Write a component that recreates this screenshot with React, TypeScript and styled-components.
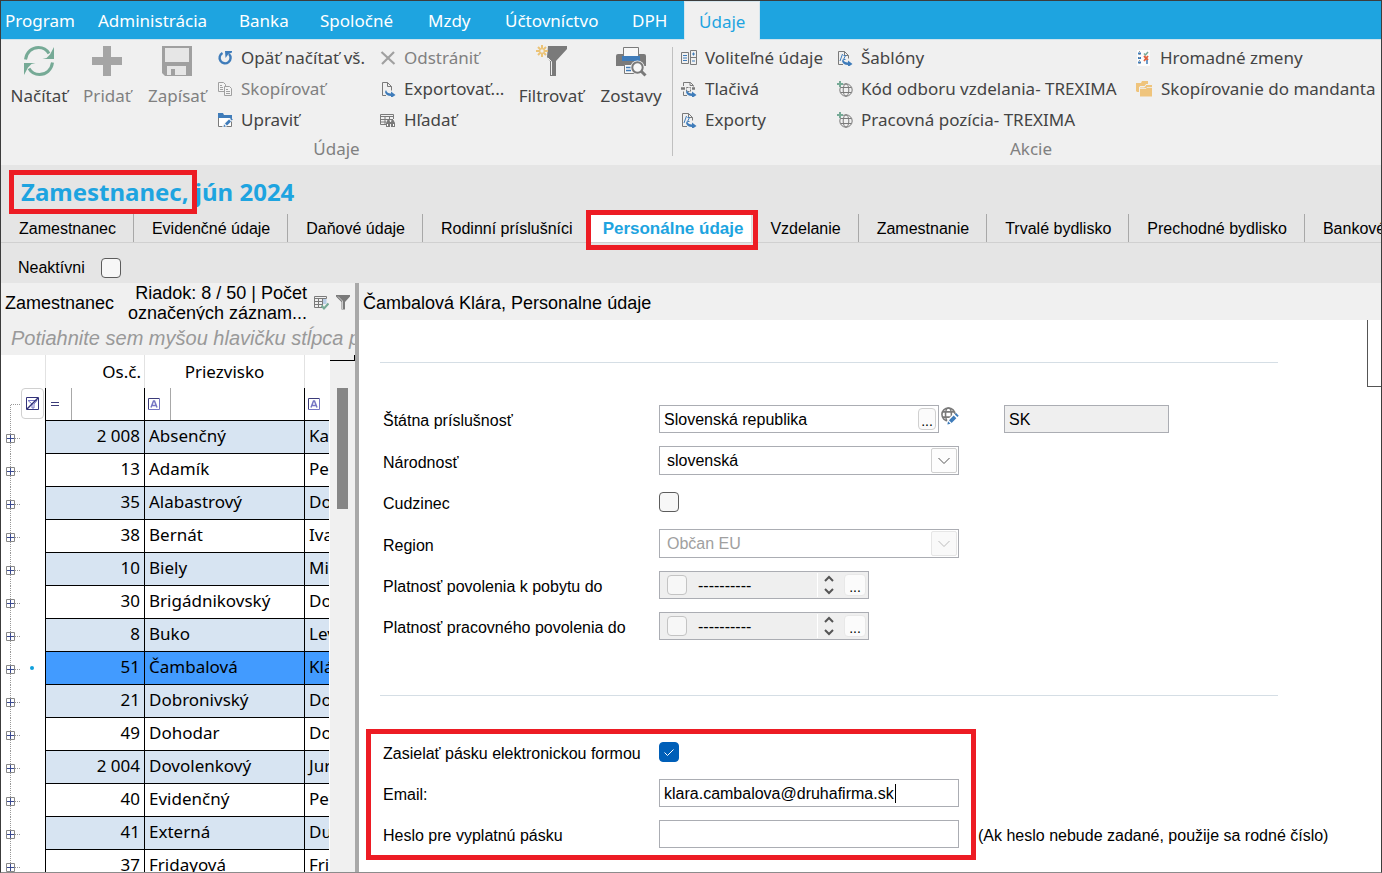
import React from 'react';
import styled, { createGlobalStyle, css } from 'styled-components';

const ui = '"Noto Sans", "Open Sans", sans-serif';
const sans = '"Liberation Sans", Arial, sans-serif';
const blue = '#1ea4e0';
const red = '#ed1c24';

const GlobalStyle = createGlobalStyle`
  *, *::before, *::after { box-sizing: border-box; }
  body { margin: 0; background: #fff; font: 16px ${sans}; color: #000; }
  button, input, select { font: inherit; color: inherit; margin: 0; }
  button { border: 0; padding: 0; background: none; text-align: left; }
`;

const Shell = styled.div`
  height: 100vh;
  overflow: hidden;
  display: flex;
  flex-direction: column;
  border: 1px solid #3c3c3c;
  border-bottom-color: #8c8c8c;
`;

/* Menu bar */
const MenuBar = styled.nav`
  flex: none;
  height: 39px;
  display: grid;
  grid-template-columns: 76px 141px 81px 108px 77px 127px 73px 76px;
  background: ${blue};
  border-bottom: 1px solid #cfe3ec;
  font: 17px/40px ${ui};
  white-space: nowrap;
`;

const MenuItem = styled.button<{ $active?: boolean }>`
  height: 38px;
  padding-left: 21px;
  color: #fff;
  &:first-child { padding-left: 4px; }
  ${p => p.$active && css`
    height: 39px;
    padding-left: 14px;
    background: #f0f0f0;
    color: ${blue};
    border: 1px solid #d5e6ee;
    border-bottom: 0;
  `}
`;

/* Ribbon */
const Ribbon = styled.div`
  flex: none;
  height: 125px;
  display: flex;
  background: #f0f0f0;
  font: 17px/24px ${ui};
  color: #444;
  white-space: nowrap;
`;

const Group = styled.section<{ $width?: number }>`
  display: flex;
  flex-direction: column;
  flex: ${p => (p.$width ? `none` : 1)};
  width: ${p => (p.$width ? `${p.$width}px` : 'auto')};
  padding-left: ${p => (p.$width ? 0 : 8)}px;
`;

const GroupBody = styled.div`
  display: flex;
  height: 97px;
  padding-top: 2px;
`;

const GroupLabel = styled.div`
  text-align: center;
  color: #808080;
`;

const Separator = styled.div`
  width: 1px;
  height: 109px;
  margin-top: 7px;
  background: #c0c0c0;
`;

const BigButton = styled.button<{ $width: number; $dim?: boolean }>`
  width: ${p => p.$width}px;
  padding-top: 3px;
  display: flex;
  flex-direction: column;
  align-items: center;
  gap: 7px;
  color: ${p => (p.$dim ? '#808080' : '#444')};
`;

const Column = styled.div<{ $width: number }>`
  width: ${p => p.$width}px;
  display: flex;
  flex-direction: column;
`;

const SmallButton = styled.button<{ $dim?: boolean }>`
  height: 31px;
  display: flex;
  align-items: center;
  gap: 8px;
  color: ${p => (p.$dim ? '#808080' : '#444')};
  svg { flex: none; }
`;

/* Title, tabs and filter strip */
const Heading = styled.header`
  flex: none;
  background: #e5e5e5;
`;

const Callout = styled.span<{ $gap: string }>`
  position: absolute;
  inset: ${p => p.$gap};
  border: 5px solid ${red};
  pointer-events: none;
  z-index: 2;
`;

const Title = styled.h1`
  margin: 0;
  padding: 5px 0 0 20px;
  height: 49px;
  font: bold 24px/44px ${ui};
  color: ${blue};
`;

const Marked = styled.span`
  position: relative;
  display: inline-block;
`;

const Tabs = styled.nav`
  display: flex;
  height: 29px;
  border-bottom: 1px solid #d0d0d0;
  white-space: nowrap;
`;

const Tab = styled.a<{ $active?: boolean }>`
  position: relative;
  flex: none;
  height: 28px;
  padding: 0 17px 0 18px;
  border-right: 1px solid #a8a8a8;
  line-height: 30px;
  color: #000;
  text-decoration: none;
  ${p => p.$active && css`
    padding: 0 8px 0 12px;
    color: ${blue};
    background: #fff;
    border-right-color: #ddd;
    font-weight: bold;
    font-size: 17px;
  `}
`;

const Strip = styled.label`
  display: flex;
  align-items: center;
  gap: 16px;
  height: 40px;
  padding: 10px 0 0 17px;
  line-height: 20px;
`;

const Check = styled.input.attrs({ type: 'checkbox' })<{ $soft?: boolean }>`
  appearance: none;
  flex: none;
  width: 20px;
  height: 20px;
  border: 1px solid ${p => (p.$soft ? '#c4c4c4' : '#5c5c5c')};
  border-radius: 4px;
  background: #f7f7f7;
  &:checked {
    border-color: #005fb8;
    background: #005fb8;
  }
`;

const CheckWrap = styled.span`
  position: relative;
  display: flex;
  svg { position: absolute; inset: 0; pointer-events: none; }
`;

/* Workspace */
const Work = styled.main`
  flex: 1;
  min-height: 0;
  display: flex;
`;

const ListPane = styled.section`
  flex: none;
  width: 358px;
  display: flex;
  flex-direction: column;
  border-right: 4px solid #a9a9a9;
  overflow: hidden;
`;

const ListHead = styled.div`
  flex: none;
  height: 37px;
  display: flex;
  align-items: center;
  gap: 7px;
  padding: 2px 5px 0 4px;
  background: #f0f0f0;
  font-size: 18px;
  line-height: 20px;
  white-space: nowrap;
  svg { flex: none; }
`;

const ListName = styled.span`
  flex: 1;
`;

const Counter = styled.span`
  text-align: right;
`;

const DropZone = styled.div`
  flex: none;
  height: 35px;
  padding-left: 10px;
  background: #f0f0f0;
  color: #999;
  font: italic 20px/37px ${sans};
  white-space: nowrap;
`;

const GridArea = styled.div`
  flex: 1;
  min-height: 0;
  display: flex;
`;

const GridClip = styled.div`
  flex: none;
  width: 328px;
  overflow: hidden;
`;

const Table = styled.table`
  width: 328px;
  table-layout: fixed;
  border-collapse: separate;
  border-spacing: 0;
  font: 17px/24px ${ui};
  white-space: nowrap;
`;

const HeadCell = styled.th<{ $align?: string }>`
  height: 33px;
  padding: 0 3px;
  border-right: 1px solid #e2e2e2;
  font-weight: normal;
  text-align: ${p => p.$align ?? 'center'};
  &:last-child { border-right: 0; }
`;

const FilterCell = styled.td`
  height: 33px;
  padding: 0;
  border-right: 1px solid #000;
  border-bottom: 1px solid #000;
  &:last-child { border-right: 0; }
`;

const FilterBox = styled.div`
  display: flex;
  height: 32px;
  overflow: hidden;
`;

const FilterOp = styled.button`
  flex: none;
  width: 26px;
  display: flex;
  align-items: center;
  padding-left: 3px;
  border-right: 1px solid #a8a8a8;
`;

const FilterClear = styled.button`
  display: flex;
  align-items: center;
  justify-content: center;
  width: 23px;
  height: 31px;
  border: 1px solid #d0d0d0;
  border-radius: 4px;
`;

const RowHead = styled.td`
  height: 33px;
  padding: 0;
  border-right: 1px solid #000;
`;

const RowHeadBox = styled.div`
  display: flex;
  height: 33px;
`;

const Cell = styled.td<{ $bg: string; $right?: boolean }>`
  height: 33px;
  padding: 0 4px 2px;
  border-right: 1px solid #000;
  border-bottom: 1px solid #000;
  background: ${p => p.$bg};
  text-align: ${p => (p.$right ? 'right' : 'left')};
  overflow: hidden;
  &:last-child { border-right: 0; }
`;

const Scroll = styled.div`
  flex: 1;
  display: flex;
  flex-direction: column;
  align-items: center;
  margin-left: 1px;
  background: #f0f0f0;
`;

const ScrollCap = styled.div`
  align-self: stretch;
  height: 6px;
  border: solid #000;
  border-width: 0 1px 1px 0;
  background: #f0f0f0;
`;

const Thumb = styled.div`
  width: 11px;
  height: 121px;
  margin-top: 27px;
  background: #868686;
`;

/* Detail form */
const Detail = styled.section`
  flex: 1;
  min-width: 0;
  display: flex;
  flex-direction: column;
`;

const DetailHead = styled.h2`
  flex: none;
  margin: 0;
  height: 37px;
  padding: 2px 0 0 4px;
  background: #f0f0f0;
  font: 18px/36px ${sans};
`;

const DetailBody = styled.div`
  flex: 1;
  min-height: 0;
  display: flex;
  justify-content: space-between;
  overflow: hidden;
`;

const Form = styled.form`
  width: 919px;
  padding: 42px 0 0 21px;
`;

const Rule = styled.hr`
  margin: 0;
  border: 0;
  height: 1px;
  background: #d5dee5;
`;

const Fields = styled.div<{ $top: number; $bottom: number }>`
  position: relative;
  display: flex;
  flex-direction: column;
  gap: 13px;
  padding: ${p => p.$top}px 0 ${p => p.$bottom}px 3px;
`;

const Row = styled.div`
  display: flex;
  align-items: center;
  min-height: 28px;
  white-space: nowrap;
`;

const Label = styled.label`
  flex: none;
  width: 276px;
  padding-top: 4px;
`;

const Box = styled.div<{ $width: number; $grey?: boolean }>`
  position: relative;
  flex: none;
  display: flex;
  align-items: center;
  width: ${p => p.$width}px;
  height: 28px;
  border: 1px solid #abadb3;
  background: ${p => (p.$grey ? '#efefef' : '#fff')};
`;

const Text = styled.input`
  flex: 1;
  min-width: 0;
  height: 26px;
  padding: 1px 4px 0;
  border: 0;
  outline: 0;
  background: none;
`;

const Dots = styled.button<{ $wide?: boolean }>`
  flex: none;
  width: ${p => (p.$wide ? 22 : 18)}px;
  height: 22px;
  margin-right: 2px;
  border: 1px solid ${p => (p.$wide ? '#e8e8e8' : '#d0d0d0')};
  border-radius: 4px;
  background: #fbfbfb;
  font-size: 14px;
  line-height: 24px;
  text-align: center;
`;

const Select = styled.select`
  appearance: none;
  flex: 1;
  height: 27px;
  padding: 0 7px;
  border: 0;
  outline: 0;
  background: none;
  opacity: 1;
  &:disabled { color: #a0a0a0; }
`;

const SelectBox = styled(Box)`
  height: 29px;
`;

const Arrow = styled.span<{ $faint?: boolean }>`
  position: absolute;
  right: 1px;
  top: 1px;
  width: 26px;
  height: 25px;
  display: flex;
  align-items: center;
  justify-content: center;
  border: 1px solid ${p => (p.$faint ? '#e6e6e6' : '#d0d0d0')};
  border-radius: 2px;
  background: ${p => (p.$faint ? '#f9f9f9' : '#fdfdfd')};
  pointer-events: none;
`;

const Spin = styled.span`
  display: flex;
  width: 27px;
  height: 24px;
  padding-right: 4px;
  align-items: center;
  justify-content: center;
  border-left: 1px solid #fff;
`;

const Caret = styled.span`
  position: absolute;
  left: 235px;
  top: 4px;
  width: 1px;
  height: 19px;
  background: #000;
`;

const LinkIcon = styled.button`
  align-self: flex-start;
  width: 65px;
  padding-left: 1px;
  display: flex;
`;

const Note = styled.span`
  padding: 4px 0 0 19px;
`;

const SideBox = styled.div`
  flex: none;
  width: 14px;
  height: 67px;
  border: solid #555;
  border-width: 0 0 1px 1px;
`;

const DateCheck = styled(Check)`
  margin: 0 7px;
`;

const SlipCallout = styled.span`
  position: absolute;
  inset: 33px 302px 0 -14px;
  border: 5px solid ${red};
  pointer-events: none;
`;

/* Icons */
const g = '#7a7a7a';
const b = '#3f7cba';

const Refresh = () => (
  <svg width="32" height="32" viewBox="0 0 32 32" fill="none" stroke="#76aa96" strokeWidth="3">
    <path d="M2.500 14.500C3.500 7 9 2.500 15.500 2.500c5 0 8.500 2.500 10.500 6" />
    <path d="M29.500 17.500C28.500 25 23 29.500 16.500 29.500c-5 0-8.500-2.500-10.500-6" />
    <path d="M31 2v12H19.500l4-1 3.500-3.500z M1 30V18h11.500l-4 1L5 22.500z" fill="#76aa96" stroke="none" />
  </svg>
);
const Plus = () => (
  <svg width="32" height="32" viewBox="0 0 32 32"><path d="M12 1h8v11h11v8H20v11h-8V20H1v-8h11z" fill="#a5a5a5" /></svg>
);
const Save = () => (
  <svg width="32" height="32" viewBox="0 0 32 32">
    <path d="M1 1h30v30H4l-3-3z" fill="#a0a0a0" />
    <path d="M4 3h24v14H4z" fill="#e6e6e6" />
    <path d="M6 21h19v9H6z" fill="#e6e6e6" /><path d="M10 24h4v6h-4z" fill="#a0a0a0" />
  </svg>
);
const Funnel = () => (
  <svg width="34" height="32" viewBox="0 0 34 32">
    <path d="M14 1h19v3L22 16v15h-6V16l-3-4z" fill={g} />
    <path d="M14 13l3.500 3.500V30" fill="none" stroke="#f0f0f0" />
    <g stroke="#ecc376" strokeWidth="2"><path d="M8 0v12M2 6h12M4 2l8 8M12 2l-8 8" /></g>
    <circle cx="8" cy="6" r="2.200" fill="#f0f0f0" stroke="#ecc376" />
  </svg>
);
const Printer = () => (
  <svg width="32" height="32" viewBox="0 0 32 32">
    <path d="M3 9h26q2 0 2 2v10H1V11q0-2 2-2z" fill={g} />
    <path d="M8.500 2.500h15V13h-15z" fill="#f7f7f7" stroke={g} />
    <path d="M7 11h18v5H7z" fill={b} />
    <path d="M9.500 19.500h13v9h-13z" fill="#f7f7f7" stroke={g} />
    <path d="M11 22.500h5M11 25.500h5" stroke={b} strokeWidth="1.500" />
    <circle cx="22.500" cy="22.500" r="7" fill="#f0f0f0" />
    <path d="M26 26l4.500 4.500" stroke={g} strokeWidth="3" />
    <circle cx="22.500" cy="22.500" r="5.200" fill="#f7f7f7" stroke={g} strokeWidth="2" />
  </svg>
);
const Undo = () => (
  <svg width="16" height="16" viewBox="0 0 16 16" fill="none" stroke={b} strokeWidth="2.400">
    <path d="M5.500 3a5.500 5.500 0 1 0 6.500 1" /><path d="M8 1h7v1.500l-3.500 1.500L8.500 8z" fill={b} stroke="none" />
  </svg>
);
const Copy = () => (
  <svg width="16" height="16" viewBox="0 0 16 16" stroke="#a0a0a0" fill="#f4f4f4">
    <path d="M1.500 1.500h5l2 2v7h-7z" /><path d="M3 4.500h2M3 6.500h3M3 8.500h3" />
    <path d="M7.500 5.500h5l2 2v7h-7z" /><path d="M9 8.500h2M9 10.500h4M9 12.500h4" />
  </svg>
);
const Edit = () => (
  <svg width="16" height="16" viewBox="0 0 16 16">
    <path d="M1.500 3.500h13v11h-13z" fill="#fff" stroke={g} /><path d="M1 1h5l1 2h8v3H1z" fill={b} />
    <path d="M5 16l1-4 7-6 3 2-7 7z" fill="#f4f4f4" /><path d="M6.500 15l.6-2.500 1.900 2zM8 11.600l4-4 2 2-4 4zM13 6.800l1-1 1.800 1.800-1 1z" fill={b} />
  </svg>
);
const Cross = () => (
  <svg width="16" height="16" viewBox="0 0 16 16" stroke="#a0a0a0" strokeWidth="2.200"><path d="M1.500 2l13 12M14 2L2 14" /></svg>
);
const Swoosh = () => <path d="M6 9q1 3.500 5 3.500V10.500l4.500 3.500-4.500 3v-2q-5 0-6-4z" fill={b} stroke="none" />;
const ExportIcon = () => (
  <svg width="16" height="16" viewBox="0 0 16 16" fill="none" stroke={g}>
    <path d="M6 14.500H2.500v-13h5l4 4v4M7.500 1.500v4h4" /><Swoosh />
  </svg>
);
const FindIcon = () => (
  <svg width="16" height="16" viewBox="0 0 16 16" fill="none" stroke={g}>
    <path d="M.5 2.500h13v2H.5zM.5 4v8.500H6M5 4v8M9.500 4v3M13.500 4v3M1 7.500h12M1 10h5" />
    <path d="M6 15v-4l1.500-3h2l.5 2h1l.5-2h2l1.500 3v4h-4v-3h-1v3z" fill={g} stroke="none" />
    <path d="M7.500 12v2M13.500 12v2" stroke="#fff" />
  </svg>
);
const Optional = () => (
  <svg width="16" height="16" viewBox="0 0 16 16" fill="none" stroke={g}>
    <path d="M.5 2.500h7v11h-7zM9.500.5h6v14h-6zM9.500 7.500h6" /><path d="M2 5.500h4M2 8h4M2 10.500h4M11 4h3M12.500 2.500v3M11 11h3" stroke={b} />
  </svg>
);
const Forms = () => (
  <svg width="16" height="16" viewBox="0 0 16 16" fill="none" stroke={g}>
    <path d="M2.500 5V1.500h7l3 3v1M2.500 10.500v4H6M9 1.500v3h3" /><path d="M0 7.500h4M11 7.500h3" strokeWidth="2.500" /><path d="M5.500 6.500h4v4h-4z" strokeDasharray="2 1" /><Swoosh />
  </svg>
);
const Templates = () => (
  <svg width="16" height="16" viewBox="0 0 16 16" fill="none" stroke={g}>
    <path d="M6 14.500H1.500v-13h6l4 4v3M7.500 1.500v4h4" /><path d="M3 11l2.500-7M6.500 5.500h2l-2 4h2" stroke={b} /><Swoosh />
  </svg>
);
const GlobeLines = () => <><circle cx="9" cy="9" r="6.200" /><ellipse cx="9" cy="9" rx="2.800" ry="6.200" /><path d="M3.500 6.500h11M3.500 11.500h11" /></>;
const GlobePlus = () => (
  <svg width="16" height="16" viewBox="0 0 16 16" fill="none" stroke={g}>
    <GlobeLines /><path d="M0 0h6v6H0z" fill="#f0f0f0" stroke="none" /><path d="M0 3h6M3 0v6" stroke="#76aa96" strokeWidth="2" />
  </svg>
);
const GlobeEdit = () => (
  <svg width="19" height="20" viewBox="0 0 18 19" fill="none" stroke={g} strokeWidth="1.500">
    <g transform="translate(-1 0)"><GlobeLines /></g>
    <path d="M6 19l1-5 6-6 4 2-7 7z" fill="#fff" stroke="none" />
    <path d="M7 18.500l.6-3 2.400 2.400zM8.500 14.500l4.500-4.500 2.500 2.500-4.500 4.500zM14 9l1.300-1.300 2.500 2.500-1.300 1.300z" fill={b} stroke="none" />
  </svg>
);
const Bulk = () => (
  <svg width="16" height="16" viewBox="0 0 16 16" fill="none">
    <path d="M1 0h13v16H1z" fill="#fcfcfc" /><path d="M2 3.500h3M2 8h3M2 12.500h3" stroke={b} strokeWidth="1.800" /><path d="M3.500 1v13" stroke="#999" strokeDasharray="1 2" />
    <path d="M8 3.500l1.500 1.500L12 2" stroke="#76aa96" strokeWidth="1.500" /><path d="M8 6l4 4M12 6l-4 5" stroke="#e0603c" strokeWidth="1.800" /><path d="M11 10v4" stroke={b} strokeWidth="1.500" />
  </svg>
);
const Folders = () => (
  <svg width="17" height="16" viewBox="0 0 17 16" fill="#efc47c">
    <path d="M0 2h5l1-2h6v5H4v6H1l-1-1z" /><path d="M3.500 6h5l1.500-2.500h6.500V16h-13z" stroke="#f0f0f0" /><path d="M4 7.500h6l1-1h5" stroke="#f0f0f0" strokeWidth=".8" fill="none" />
  </svg>
);
const GridCheck = () => (
  <svg width="15" height="15" viewBox="0 0 15 15" fill="none" stroke={g}>
    <path d="M.5 1.500h12v2H.5zM.5 3v9.500H8M4.500 3v9M8.500 3v9M1 6.500h8M1 9.500h8" /><path d="M9 4h3.500v5H9z" fill="#b9cfe6" stroke="none" /><path d="M7.500 10.500l2.500 3 4.500-5" stroke="#76aa96" strokeWidth="2" />
  </svg>
);
const SmallFunnel = () => (
  <svg width="14" height="15" viewBox="0 0 14 15"><path d="M0 0h14v1.500L9 7v7.500H5.500V7L0 1.500z" fill={g} /><path d="M2 1.500L6.500 6v8" stroke="#ccc" fill="none" /></svg>
);
const EqualsIcon = () => (
  <svg width="12" height="12" viewBox="0 0 12 12" stroke="#3b3b78"><path d="M2 4.500h8M2 7.500h8" /></svg>
);
const Alpha = () => (
  <svg width="12" height="12" viewBox="0 0 12 12" fill="none" stroke="#7676c4">
    <path d="M.5 11.500V.5h11" stroke="#3b3b78" /><path d="M11.500.5v11H.5" /><path d="M3 9.500L5.500 3h1L9 9.500M4 7.500h4" strokeWidth="1.500" />
  </svg>
);
const ClearIcon = () => (
  <svg width="13" height="13" viewBox="0 0 13 13" fill="none" stroke="#33337a">
    <path d="M.5.500h12v12H.5z" /><path d="M2 3.500h9L8 7v4H6V7z" stroke="#7676c4" /><path d="M1 12L12 1" strokeWidth="1.500" />
  </svg>
);
const Chevron = ({ faint }: { faint?: boolean }) => (
  <svg width="12" height="8" viewBox="0 0 12 8" fill="none" stroke={faint ? '#bbb' : '#555'}><path d="M.5 1l5.500 5.500L11.500 1" /></svg>
);
const Spinners = () => (
  <svg width="10" height="20" viewBox="0 0 10 20" fill="none" stroke="#555" strokeWidth="2"><path d="M1 6l4-4 4 4M1 14l4 4 4-4" /></svg>
);
const Tree = ({ kind, dot }: { kind: 'top' | 'row'; dot?: boolean }) => (
  <svg width={kind === 'top' ? 20 : 44} height="33" viewBox={`0 0 ${kind === 'top' ? 20 : 44} 33`} fill="none">
    {kind === 'top' ? (
      <path d="M19 16.500H9.500V33" stroke="#999" strokeDasharray="1 1" />
    ) : (
      <>
        <path d="M9.500 0v33M14 17.500h5" stroke="#999" strokeDasharray="1 1" />
        <path d="M5.500 13.500h8v8h-8z" fill="#fff" stroke="#888" />
        <path d="M6 17.500h7M9.500 14v7" stroke="#3a4a90" />
      </>
    )}
    {dot && <circle cx="31" cy="16" r="2" fill="#0fa0dc" />}
  </svg>
);

const people: [string, string, string][] = [
  ['2 008', 'Absenčný', 'Karol'], ['13', 'Adamík', 'Peter'], ['35', 'Alabastrový', 'Dominik'], ['38', 'Bernát', 'Ivan'],
  ['10', 'Biely', 'Milan'], ['30', 'Brigádnikovský', 'Dodo'], ['8', 'Buko', 'Levoslav'], ['51', 'Čambalová', 'Klára'],
  ['21', 'Dobronivský', 'Dodo'], ['49', 'Dohodar', 'Dodo'], ['2 004', 'Dovolenkový', 'Juraj'], ['40', 'Evidenčný', 'Peter'],
  ['41', 'Externá', 'Dušana'], ['37', 'Fridayová', 'Frida'],
];
const rowColour = (i: number) => (i === 7 ? '#429bff' : i % 2 === 0 ? '#d7e4f2' : '#fff');

const DateField = ({ id }: { id: string }) => (
  <Box $width={210} $grey>
    <DateCheck aria-label="Zadať dátum" $soft />
    <Text id={id} defaultValue="----------" />
    <Spin><Spinners /></Spin>
    <Dots type="button" $wide>...</Dots>
  </Box>
);

export default function App() {
  return (
    <Shell>
      <GlobalStyle />
      <MenuBar>
        {['Program', 'Administrácia', 'Banka', 'Spoločné', 'Mzdy', 'Účtovníctvo', 'DPH'].map(t => <MenuItem key={t}>{t}</MenuItem>)}
        <MenuItem $active>Údaje</MenuItem>
      </MenuBar>

      <Ribbon>
        <Group $width={671}>
          <GroupBody>
            <BigButton $width={76}><Refresh />Načítať</BigButton>
            <BigButton $width={60} $dim><Plus />Pridať</BigButton>
            <BigButton $width={80} $dim><Save />Zapísať</BigButton>
            <Column $width={163}>
              <SmallButton><Undo />Opäť načítať vš.</SmallButton>
              <SmallButton $dim><Copy />Skopírovať</SmallButton>
              <SmallButton><Edit />Upraviť</SmallButton>
            </Column>
            <Column $width={129}>
              <SmallButton $dim><Cross />Odstrániť</SmallButton>
              <SmallButton><ExportIcon />Exportovať...</SmallButton>
              <SmallButton><FindIcon />Hľadať</SmallButton>
            </Column>
            <BigButton $width={84}><Funnel />Filtrovať</BigButton>
            <BigButton $width={76}><Printer />Zostavy</BigButton>
          </GroupBody>
          <GroupLabel>Údaje</GroupLabel>
        </Group>
        <Separator />
        <Group>
          <GroupBody>
            <Column $width={156}>
              <SmallButton><Optional />Voliteľné údaje</SmallButton>
              <SmallButton><Forms />Tlačivá</SmallButton>
              <SmallButton><Templates />Exporty</SmallButton>
            </Column>
            <Column $width={299}>
              <SmallButton><Templates />Šablóny</SmallButton>
              <SmallButton><GlobePlus />Kód odboru vzdelania- TREXIMA</SmallButton>
              <SmallButton><GlobePlus />Pracovná pozícia- TREXIMA</SmallButton>
            </Column>
            <Column $width={244}>
              <SmallButton><Bulk />Hromadné zmeny</SmallButton>
              <SmallButton><Folders />Skopírovanie do mandanta</SmallButton>
            </Column>
          </GroupBody>
          <GroupLabel>Akcie</GroupLabel>
        </Group>
      </Ribbon>

      <Heading>
        <Title><Marked>Zamestnanec,<Callout $gap="0 -8px 0 -12px" /></Marked> jún 2024</Title>
        <Tabs>
          <Tab href="#zamestnanec">Zamestnanec</Tab>
          <Tab href="#evidencne">Evidenčné údaje</Tab>
          <Tab href="#danove">Daňové údaje</Tab>
          <Tab href="#rodinni">Rodinní príslušníci</Tab>
          <Tab href="#personalne" $active>Personálne údaje<Callout $gap="-4px -7px -8px -5px" /></Tab>
          <Tab href="#vzdelanie">Vzdelanie</Tab>
          <Tab href="#zamestnanie">Zamestnanie</Tab>
          <Tab href="#trvale">Trvalé bydlisko</Tab>
          <Tab href="#prechodne">Prechodné bydlisko</Tab>
          <Tab href="#bankove">Bankové</Tab>
        </Tabs>
        <Strip>Neaktívni<Check /></Strip>
      </Heading>

      <Work>
        <ListPane>
          <ListHead>
            <ListName>Zamestnanec</ListName>
            <Counter>Riadok: 8 / 50 | Počet<br />označených záznam...</Counter>
            <GridCheck />
            <SmallFunnel />
          </ListHead>
          <DropZone>Potiahnite sem myšou hlavičku stĺpca pre</DropZone>
          <GridArea>
            <GridClip>
              <Table>
                <colgroup><col style={{ width: 45 }} /><col style={{ width: 99 }} /><col style={{ width: 160 }} /><col /></colgroup>
                <thead>
                  <tr><HeadCell /><HeadCell $align="right">Os.č.</HeadCell><HeadCell>Priezvisko</HeadCell><HeadCell /></tr>
                </thead>
                <tbody>
                  <tr>
                    <RowHead><RowHeadBox><Tree kind="top" /><FilterClear aria-label="Zrušiť filter"><ClearIcon /></FilterClear></RowHeadBox></RowHead>
                    <FilterCell><FilterBox><FilterOp aria-label="Rovná sa"><EqualsIcon /></FilterOp></FilterBox></FilterCell>
                    <FilterCell><FilterBox><FilterOp aria-label="Obsahuje"><Alpha /></FilterOp></FilterBox></FilterCell>
                    <FilterCell><FilterBox><FilterOp aria-label="Obsahuje"><Alpha /></FilterOp></FilterBox></FilterCell>
                  </tr>
                  {people.map(([no, last, first], i) => (
                    <tr key={no}>
                      <RowHead><RowHeadBox><Tree kind="row" dot={i === 7} /></RowHeadBox></RowHead>
                      <Cell $bg={rowColour(i)} $right>{no}</Cell>
                      <Cell $bg={rowColour(i)}>{last}</Cell>
                      <Cell $bg={rowColour(i)}>{first}</Cell>
                    </tr>
                  ))}
                </tbody>
              </Table>
            </GridClip>
            <Scroll><ScrollCap /><Thumb /></Scroll>
          </GridArea>
        </ListPane>

        <Detail>
          <DetailHead>Čambalová Klára, Personalne údaje</DetailHead>
          <DetailBody>
            <Form>
              <Rule />
              <Fields $top={42} $bottom={55}>
                <Row>
                  <Label htmlFor="state">Štátna príslušnosť</Label>
                  <Box $width={280}><Text id="state" defaultValue="Slovenská republika" /><Dots type="button">...</Dots></Box>
                  <LinkIcon type="button" aria-label="Upraviť štát"><GlobeEdit /></LinkIcon>
                  <Box $width={165} $grey><Text aria-label="Kód štátu" readOnly defaultValue="SK" /></Box>
                </Row>
                <Row>
                  <Label htmlFor="nation">Národnosť</Label>
                  <SelectBox $width={300}><Select id="nation"><option>slovenská</option></Select><Arrow><Chevron /></Arrow></SelectBox>
                </Row>
                <Row><Label htmlFor="foreign">Cudzinec</Label><Check id="foreign" /></Row>
                <Row>
                  <Label htmlFor="region">Region</Label>
                  <SelectBox $width={300}><Select id="region" disabled><option>Občan EU</option></Select><Arrow $faint><Chevron faint /></Arrow></SelectBox>
                </Row>
                <Row><Label htmlFor="stay">Platnosť povolenia k pobytu do</Label><DateField id="stay" /></Row>
                <Row><Label htmlFor="work">Platnosť pracovného povolenia do</Label><DateField id="work" /></Row>
              </Fields>
              <Rule />
              <Fields $top={42} $bottom={12}>
                <SlipCallout />
                <Row>
                  <Label htmlFor="send">Zasielať pásku elektronickou formou</Label>
                  <CheckWrap>
                    <Check id="send" defaultChecked />
                    <svg width="20" height="20" viewBox="0 0 20 20" fill="none" stroke="#fff"><path d="M5.500 10.500l3 3 6-6" /></svg>
                  </CheckWrap>
                </Row>
                <Row><Label htmlFor="email">Email:</Label><Box $width={300}><Text id="email" defaultValue="klara.cambalova@druhafirma.sk" /><Caret /></Box></Row>
                <Row><Label htmlFor="pass">Heslo pre vyplatnú pásku</Label><Box $width={300}><Text id="pass" /></Box><Note>(Ak heslo nebude zadané, použije sa rodné číslo)</Note></Row>
              </Fields>
            </Form>
            <SideBox />
          </DetailBody>
        </Detail>
      </Work>
    </Shell>
  );
}
